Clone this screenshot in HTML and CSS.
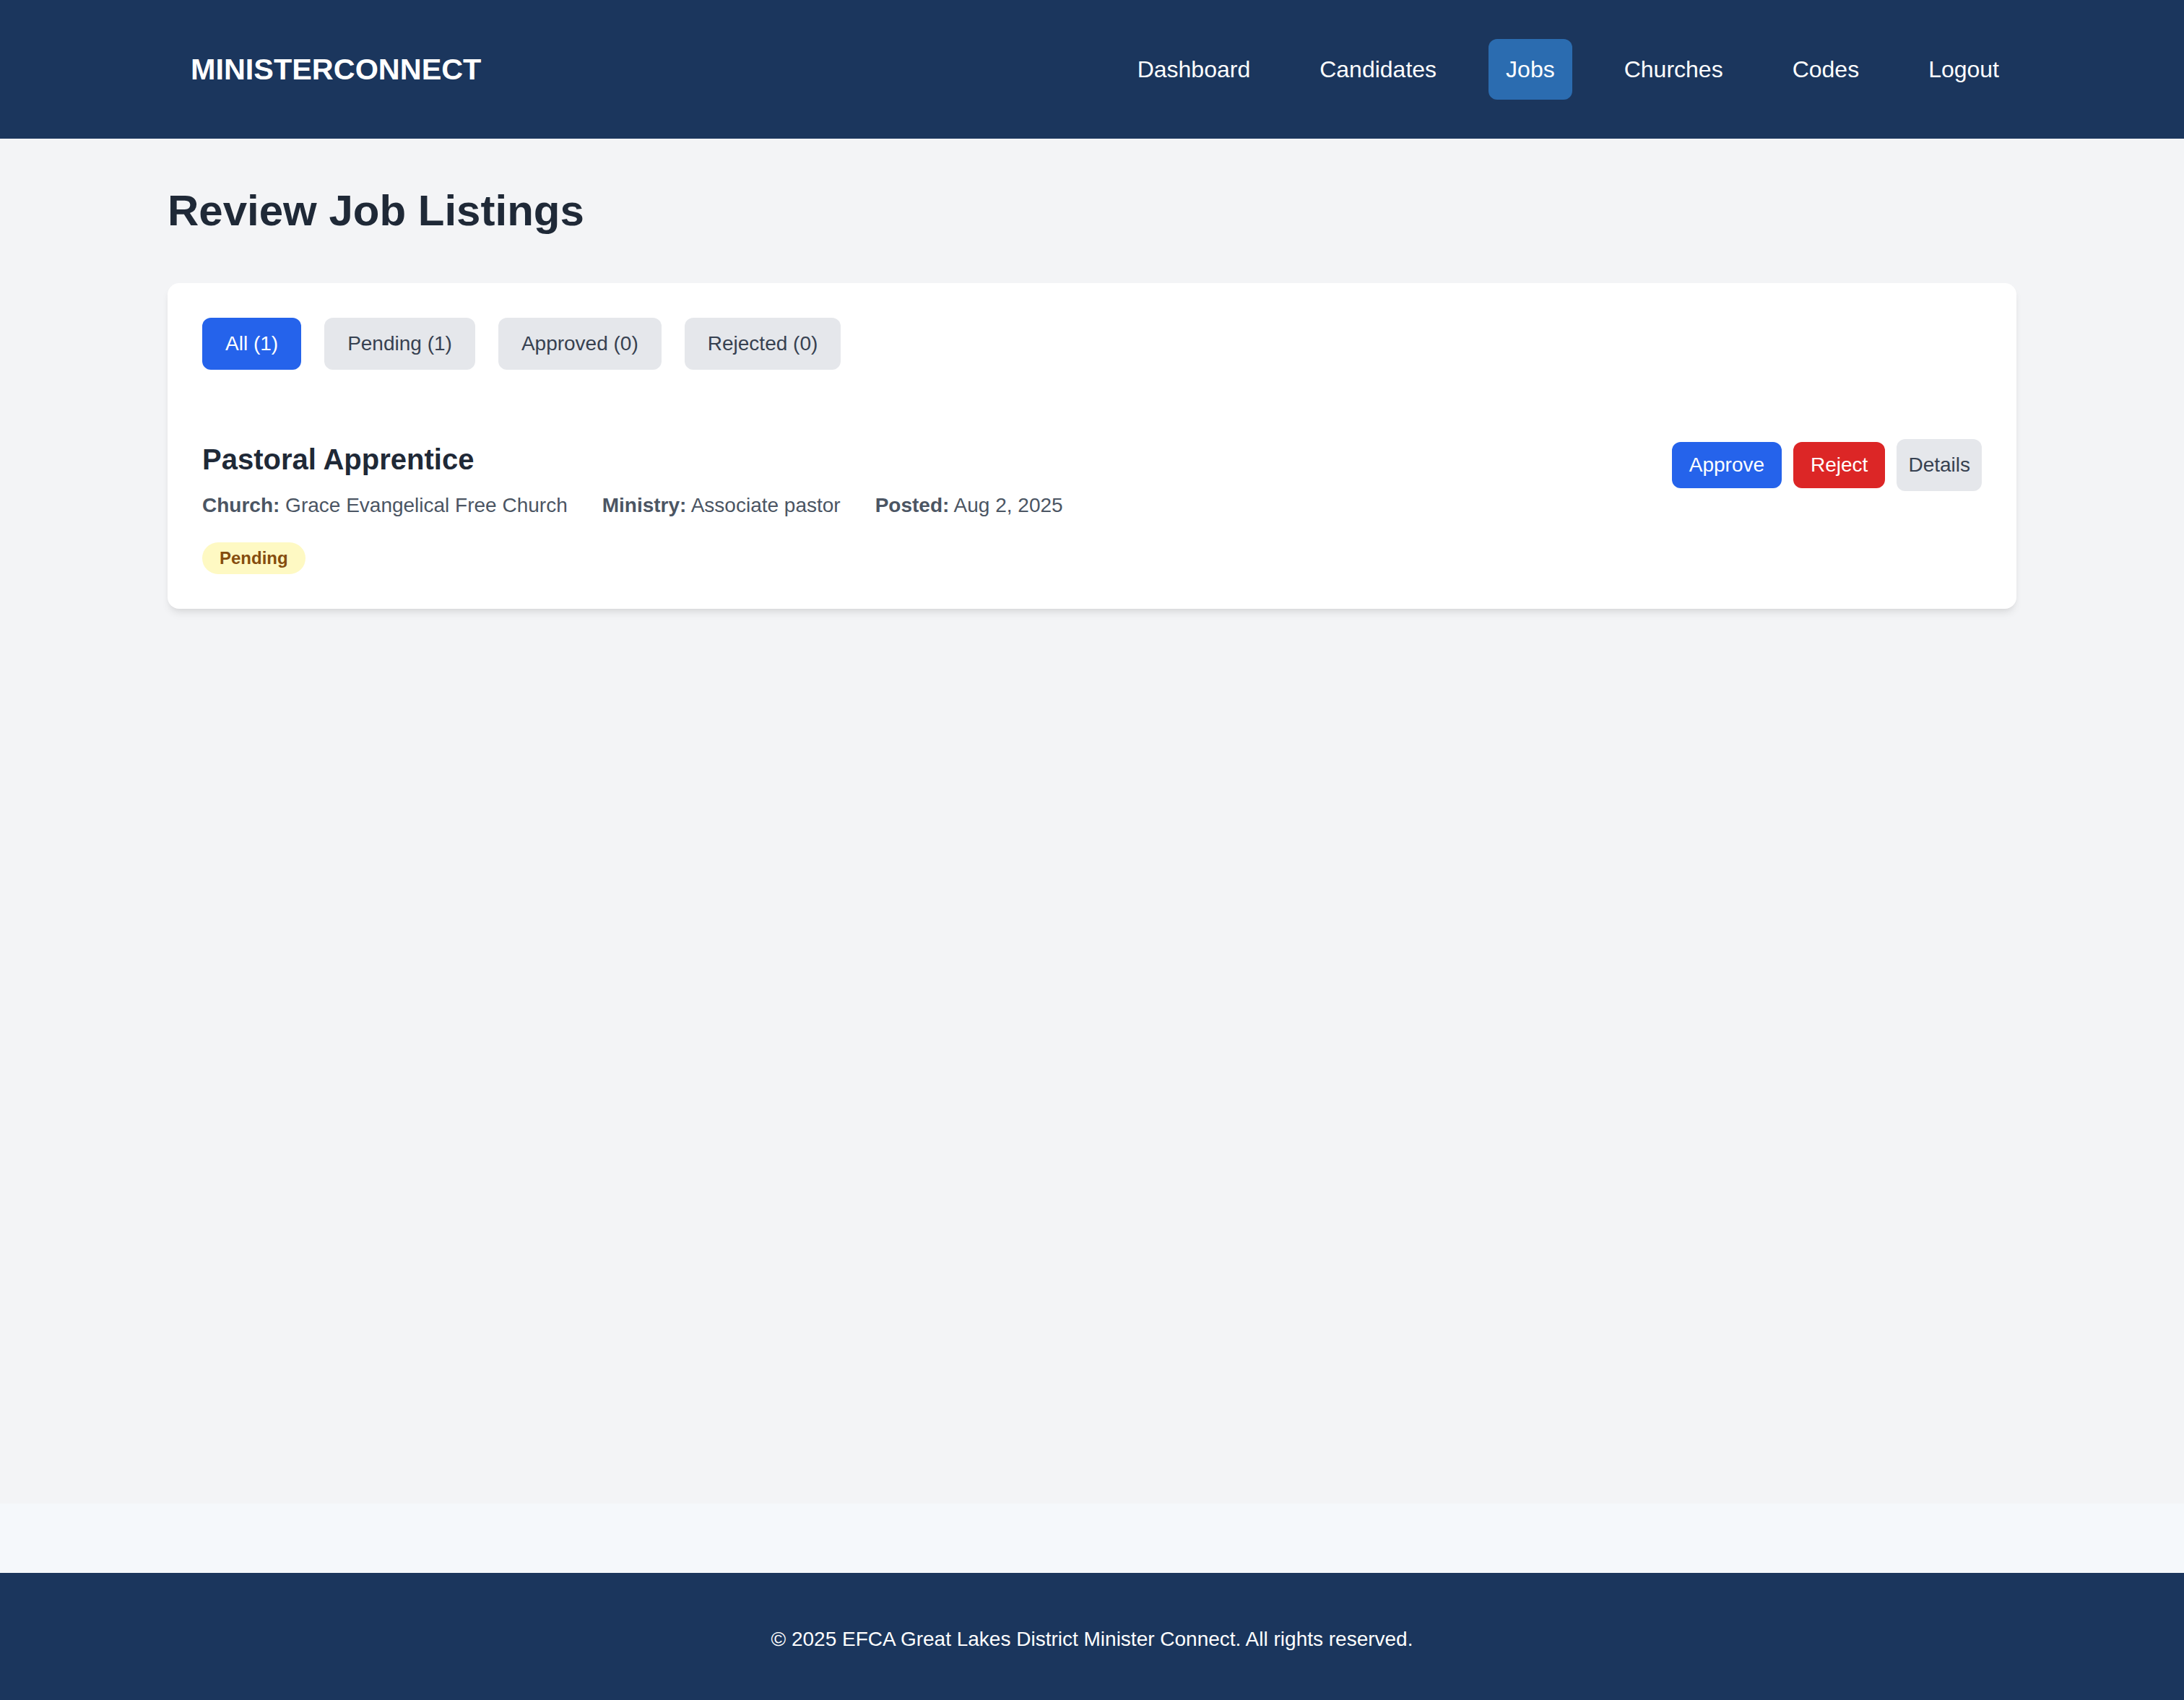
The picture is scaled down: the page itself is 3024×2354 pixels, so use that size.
FILE: index.html
```html
<!DOCTYPE html>
<html lang="en">
<head>
<meta charset="utf-8">
<title>Review Job Listings - MinisterConnect</title>
<link rel="stylesheet" href="styles.css">
</head>
<body>
<header class="site-header">
  <div class="header-inner">
    <div class="logo">MinisterConnect</div>
    <nav class="nav">
      <a class="nav-link" href="#">Dashboard</a>
      <a class="nav-link" href="#">Candidates</a>
      <a class="nav-link active" href="#">Jobs</a>
      <a class="nav-link" href="#">Churches</a>
      <a class="nav-link" href="#">Codes</a>
      <a class="nav-link" href="#">Logout</a>
    </nav>
  </div>
</header>
<main class="main">
  <div class="container">
    <h1 class="page-title">Review Job Listings</h1>
    <section class="card">
      <div class="filters">
        <button class="filter active">All (1)</button>
        <button class="filter">Pending (1)</button>
        <button class="filter">Approved (0)</button>
        <button class="filter">Rejected (0)</button>
      </div>
      <div class="job">
        <div class="job-info">
          <h2 class="job-title">Pastoral Apprentice</h2>
          <div class="job-meta">
            <span><strong>Church:</strong> Grace Evangelical Free Church</span>
            <span><strong>Ministry:</strong> Associate pastor</span>
            <span><strong>Posted:</strong> Aug 2, 2025</span>
          </div>
          <span class="badge">Pending</span>
        </div>
        <div class="job-actions">
          <button class="btn btn-approve">Approve</button>
          <button class="btn btn-reject">Reject</button>
          <button class="btn btn-details">Details</button>
        </div>
      </div>
    </section>
  </div>
</main>
<footer class="site-footer">
  <p>© 2025 EFCA Great Lakes District Minister Connect. All rights reserved.</p>
</footer>
</body>
</html>
```
FILE: styles.css
```css
* { box-sizing: border-box; }
html, body { margin: 0; padding: 0; }
body {
  font-family: "Liberation Sans", Arial, Helvetica, sans-serif;
  background: #f5f8fb;
  min-height: 100vh;
  display: flex;
  flex-direction: column;
  color: #1f2937;
}
.site-header {
  background: #1b365d;
  height: 192px;
  flex-shrink: 0;
}
.header-inner {
  max-width: 2560px;
  margin: 0 auto;
  height: 100%;
  display: flex;
  align-items: center;
  justify-content: space-between;
}
.logo {
  margin-left: 32px;
  color: #ffffff;
  font-weight: 700;
  font-size: 41.4px;
  text-transform: uppercase;
}
.nav {
  display: flex;
  gap: 48px;
}
.nav-link {
  color: #ffffff;
  text-decoration: none;
  font-size: 32px;
  line-height: 48px;
  padding: 18px 24px;
  border-radius: 12px;
}
.nav-link.active { background: #2b6cb0; }
.main {
  flex: 1;
  background: #f3f4f6;
  margin-bottom: 96px;
}
.container {
  max-width: 2560px;
  margin: 0 auto;
  padding: 64px 0;
}
.page-title {
  margin: 0 0 64px;
  font-size: 60px;
  line-height: 72px;
  font-weight: 700;
  color: #1f2937;
}
.card {
  background: #ffffff;
  border-radius: 16px;
  padding: 48px;
  box-shadow: 0 8px 12px -2px rgba(0,0,0,0.08), 0 4px 8px -4px rgba(0,0,0,0.08);
}
.filters {
  display: flex;
  gap: 32px;
  margin-bottom: 48px;
}
.filter {
  font-family: inherit;
  border: 0;
  font-size: 28px;
  line-height: 40px;
  padding: 16px 32px;
  border-radius: 12px;
  background: #e5e7eb;
  color: #374151;
}
.filter.active { background: #2563eb; color: #ffffff; }
.job {
  display: flex;
  justify-content: space-between;
  align-items: flex-start;
  padding-top: 48px;
}
.job-info { display: flex; flex-direction: column; align-items: flex-start; }
.job-title {
  margin: 0;
  font-size: 40px;
  line-height: 56px;
  font-weight: 700;
  color: #1f2937;
}
.job-meta {
  margin-top: 16px;
  display: flex;
  gap: 48px;
  font-size: 28px;
  line-height: 40px;
  color: #4b5563;
}
.job-meta strong { font-weight: 700; }
.badge {
  margin-top: 31px;
  display: inline-block;
  background: #fef9c3;
  color: #854d0e;
  font-size: 24px;
  font-weight: 700;
  line-height: 28px;
  padding: 8px 24px;
  border-radius: 9999px;
}
.job-actions {
  display: flex;
  align-items: center;
  gap: 16px;
}
.btn {
  font-family: inherit;
  border: 0;
  font-size: 28px;
  line-height: 40px;
  border-radius: 12px;
}
.btn-approve { background: #2563eb; color: #ffffff; padding: 12px 24px; }
.btn-reject { background: #dc2626; color: #ffffff; padding: 12px 24px; }
.btn-details { background: #e5e7eb; color: #374151; padding: 16px 16px; }
.site-footer {
  background: #1b365d;
  color: #ffffff;
  height: 176px;
  flex-shrink: 0;
  text-align: center;
  padding-top: 72px;
}
.site-footer p {
  margin: 0;
  font-size: 28px;
  line-height: 40px;
}
```
